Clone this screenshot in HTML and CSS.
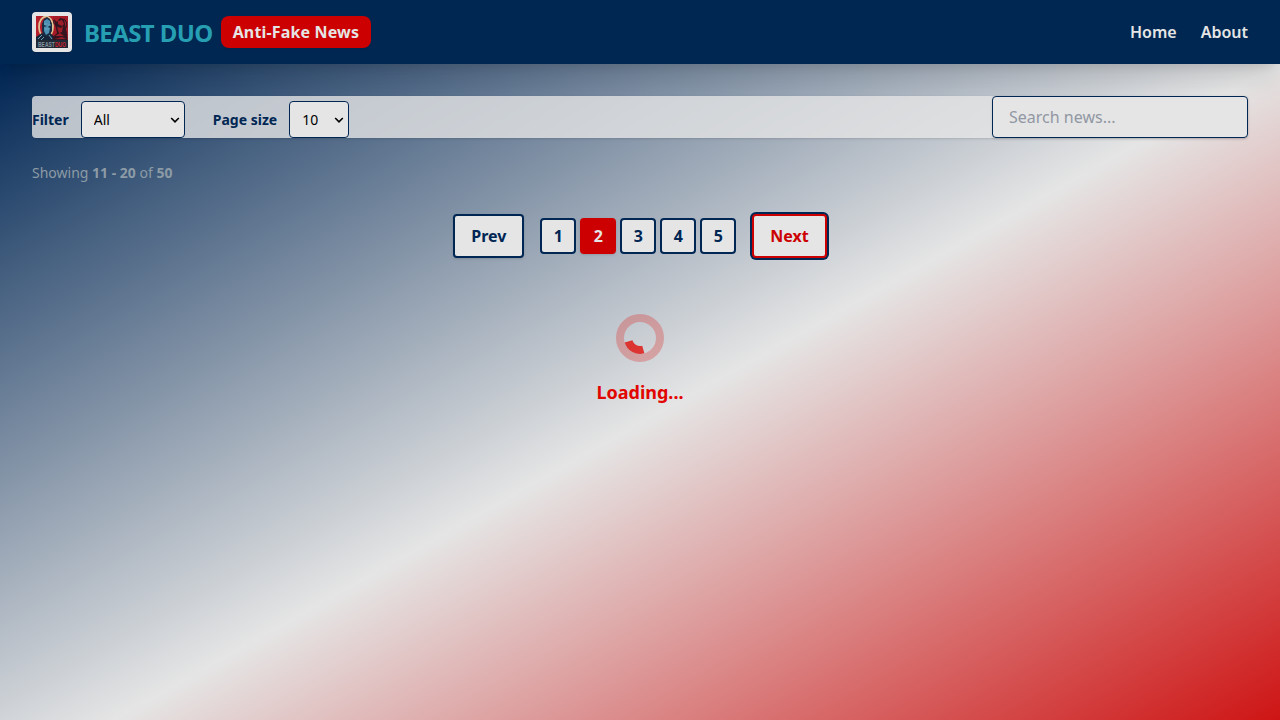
FILE: index.html
```html
<!DOCTYPE html>
<html lang="en">
<head>
<meta charset="utf-8">
<title>Beast Duo Anti-Fake News</title>
<link rel="stylesheet" href="styles.css">
</head>
<body>
<header class="header">
  <div class="brand">
    <svg class="logo" viewBox="0 0 32 32" aria-hidden="true">
      <rect width="32" height="32" fill="#b5202c"/>
      <rect x="17" width="15" height="32" fill="#a81a26"/>
      <ellipse cx="10" cy="11" rx="7" ry="10.5" fill="#b5202c" stroke="#e0c493" stroke-width="1.8"/>
      <path d="M0 32V21l6-4 4 2 4-2 5 4v11z" fill="#172538"/>
      <path d="M6 8l2-5 3-2 3 2 2 5v7l-3 5H8l-2-5z" fill="#182c43"/>
      <path d="M8 5l3-2 3 2v4l-2 2 2 1-1 5-3 2-2-4v-4l3-1-3-1z" fill="#4c91b3"/>
      <path d="M8 8h3M12 9h3M9 13h4M2 23l4-4M4 25l4-4M13 19l3 4" stroke="#6ca4ba" fill="none"/>
      <path d="M19 8l-1-5 3 3 3-4 4 1 1 5 2 10 1 14H17V21l4-4z" fill="#34141e"/>
      <path d="M22 5l4-1 2 4-2 2-4-2zM21 11l4 1 2-2-1 6-3 1zM19 20l5-3 4 3M19 23l7-2 4 2" fill="#9c1c28"/>
      <path d="M18 4c-1 4 1 5 3 5M28 3c3 2 3 6 2 9" stroke="#1c1523" fill="none"/>
      <rect y="24" width="32" height="8" fill="#202a36"/>
      <text class="logo-text" x="2" y="30.5" textLength="28" lengthAdjust="spacingAndGlyphs" fill="#8295a0">BEAST<tspan fill="#d0222d">DUO</tspan></text>
    </svg>
    <span class="brand-name">BEAST DUO</span>
    <span class="badge">Anti-Fake News</span>
  </div>
  <nav class="nav"><a>Home</a><a>About</a></nav>
</header>
<main class="main">
  <div class="toolbar">
    <div class="filters">
      <label for="filter">Filter</label>
      <select id="filter" class="select select-filter"><option>All</option></select>
      <label class="size-label" for="size">Page size</label>
      <select id="size" class="select select-size"><option>10</option></select>
    </div>
    <input class="search" type="text" placeholder="Search news...">
  </div>
  <p class="summary">Showing <b>11 - 20</b> of <b>50</b></p>
  <div class="pagination">
    <button class="step">Prev</button>
    <div class="pages">
      <button class="page">1</button><button class="page current">2</button><button class="page">3</button><button class="page">4</button><button class="page">5</button>
    </div>
    <button class="step next">Next</button>
  </div>
  <div class="loading">
    <svg class="spinner" viewBox="0 0 48 48" aria-hidden="true">
      <circle cx="24" cy="24" r="20" fill="none" stroke="#e10600" stroke-opacity=".25" stroke-width="8"/>
      <path d="M27.3 35.5A12 12 0 0 1 12.5 27.3" fill="none" stroke="#e10600" stroke-opacity=".77" stroke-width="8"/>
    </svg>
    <span>Loading...</span>
  </div>
</main>
</body>
</html>
```
FILE: styles.css
```css
* { box-sizing: border-box; }
body { margin: 0; height: 720px; overflow: hidden; font-family: "Noto Sans", sans-serif; font-size: 16px; line-height: 24px; color: #002654; }
button, input, select { font-family: inherit; }
.header { position: relative; z-index: 1; display: flex; justify-content: space-between; align-items: center; height: 64px; padding: 0 32px; background: #002752; box-shadow: 0 20px 25px -5px rgba(0,0,0,.1), 0 8px 10px -6px rgba(0,0,0,.1); }
.brand { display: flex; align-items: center; }
.logo { width: 40px; height: 40px; padding: 4px; margin-right: 12px; background: #e5e5e5; border-radius: 4px; box-shadow: 0 1px 3px rgba(0,0,0,.1); }
.logo-text { font: bold 8px "Liberation Sans", sans-serif; }
.brand-name { padding-top: 2px; font-size: 24px; font-weight: 700; line-height: 32px; letter-spacing: -.6px; color: #279fb3; }
.badge { margin-left: 8px; padding: 4px 12px; border-radius: 8px; background: #cc0000; color: #e5e5e5; font-weight: 700; letter-spacing: .16px; box-shadow: 0 1px 3px rgba(0,0,0,.1); }
.nav { display: flex; gap: 24px; color: #e5e5e5; font-weight: 600; }
.main { height: 656px; padding: 32px; background: linear-gradient(to bottom right, #002654, #e5e5e5, #cc0000) 0 0 / 100% 720px no-repeat; }
.toolbar { display: flex; justify-content: space-between; height: 42px; border-radius: 4px; background: rgba(229,229,229,.8); box-shadow: 0 1px 3px rgba(0,0,0,.1), 0 1px 2px -1px rgba(0,0,0,.1); }
.filters { display: flex; align-items: center; gap: 12px; padding-top: 5px; font-size: 14px; font-weight: 700; line-height: 20px; }
.size-label { margin-left: 16px; }
.select { appearance: none; height: 37px; padding: 0 12px; border: 1px solid #002654; border-radius: 4px; background: #e5e5e5 url("data:image/svg+xml,%3Csvg xmlns='http://www.w3.org/2000/svg' width='10' height='8'%3E%3Cpath d='M1.2 2 5 5.8 8.8 2' fill='none' stroke='black' stroke-width='1.6'/%3E%3C/svg%3E") right 4px center no-repeat; color: #000; font-size: 14px; }
.select-filter { width: 104px; }
.select-size { width: 60px; }
.search { width: 256px; height: 42px; padding: 8px 16px; border: 1px solid #002654; border-radius: 4px; background: #e5e5e5; font-size: 16px; line-height: 24px; box-shadow: 0 1px 3px rgba(0,0,0,.1), 0 1px 2px -1px rgba(0,0,0,.1); }
.search::placeholder { color: #9197a3; }
.summary { margin: 25px 0 0; font-size: 14px; line-height: 20px; color: #8c9ba5; }
.pagination { display: flex; justify-content: center; align-items: center; gap: 16px; margin-top: 31px; }
.step { height: 44px; padding: 0 16px; border: 2px solid #002654; border-radius: 4px; background: #e5e5e5; color: #002654; font-size: 16px; font-weight: 700; box-shadow: 0 1px 3px rgba(0,0,0,.1), 0 1px 2px -1px rgba(0,0,0,.1); }
.next { border-color: #cc0000; color: #cc0000; box-shadow: 0 0 0 2px #002654; }
.pages { display: flex; gap: 4px; }
.page { width: 36px; height: 36px; padding: 0; border: 2px solid #002654; border-radius: 4px; background: #e5e5e5; color: #002654; font-size: 16px; font-weight: 700; }
.current { border-color: #cc0000; background: #cc0000; color: #e5e5e5; box-shadow: 0 1px 3px rgba(0,0,0,.1), 0 1px 2px -1px rgba(0,0,0,.1); }
.loading { display: flex; flex-direction: column; align-items: center; gap: 16px; margin-top: 56px; color: #e10600; font-size: 18px; font-weight: 700; line-height: 28px; }
.spinner { width: 48px; height: 48px; }
```
